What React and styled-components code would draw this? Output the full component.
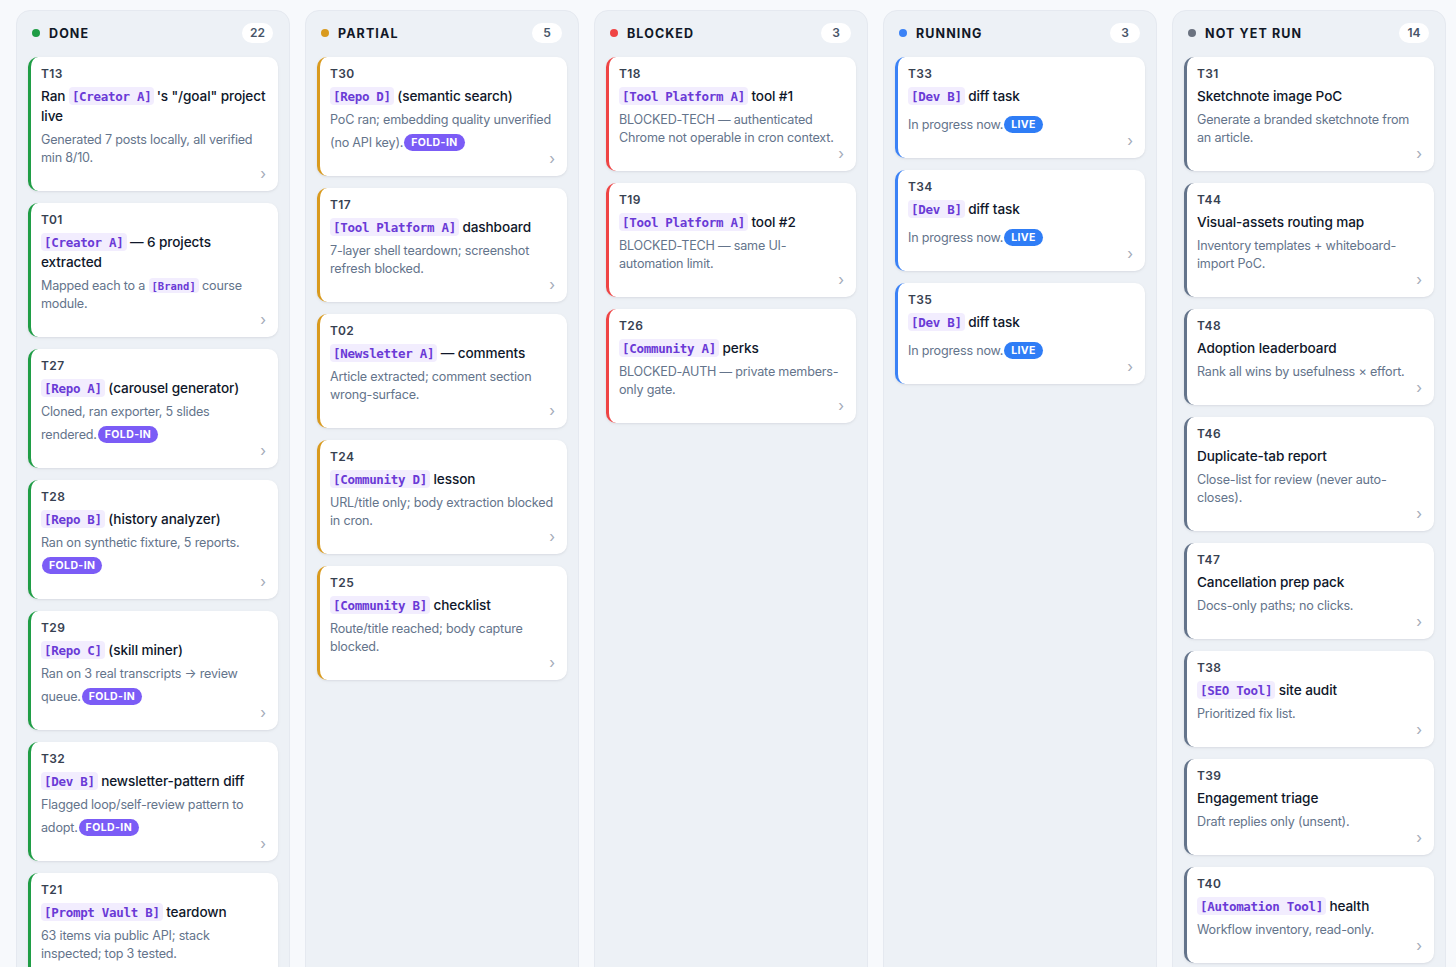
import React from 'react';
import styled, { createGlobalStyle } from 'styled-components';

const GlobalStyle = createGlobalStyle`
  html, body {
    margin: 0;
    background: #f7f9fc;
    font-family: Inter, "Noto Sans", "Liberation Sans", sans-serif;
    -webkit-font-smoothing: antialiased;
  }
`;

const Board = styled.main`
  display: grid;
  grid-template-columns: repeat(5, 274px);
  gap: 15px;
  padding: 10px 16px 0;
  align-items: stretch;
`;

const Column = styled.section`
  background: #edf1f6;
  border: 1px solid #e5e9f0;
  border-radius: 14px;
  padding: 11px;
  display: flex;
  flex-direction: column;
`;

const ColumnHeader = styled.header`
  display: flex;
  align-items: center;
  height: 22px;
  padding: 0 5px 0 4px;
  margin-bottom: 13px;
`;

const Dot = styled.span`
  width: 8px;
  height: 8px;
  border-radius: 50%;
  background: ${p => p.$color};
  margin-right: 9px;
`;

const ColumnTitle = styled.h2`
  margin: 0;
  font-size: 12.5px;
  font-weight: 700;
  letter-spacing: 1.1px;
  color: #111827;
`;

const Count = styled.span`
  margin-left: auto;
  background: #fff;
  border-radius: 11px;
  height: 20px;
  min-width: 14px;
  padding: 0 8px;
  font-size: 12px;
  font-weight: 600;
  line-height: 20px;
  color: #475569;
  text-align: center;
`;

const Stack = styled.div`
  display: flex;
  flex-direction: column;
  gap: 12px;
`;

const Card = styled.article`
  background: #fff;
  border-radius: 10px;
  border-left: 3px solid ${p => p.$accent};
  padding: 10px 12px 10px 10px;
  box-shadow: 0 1px 2px rgba(15, 23, 42, 0.06), 0 1px 4px rgba(15, 23, 42, 0.04);
`;

const CardId = styled.div`
  font-size: 12px;
  font-weight: 600;
  line-height: 14px;
  letter-spacing: 0.4px;
  color: #374151;
`;

const Title = styled.div`
  margin-top: 5px;
  font-size: 13.6px;
  font-weight: 500;
  line-height: 20px;
  letter-spacing: -0.1px;
  color: #0f172a;
`;

const Desc = styled.div`
  margin-top: 5px;
  font-size: 12.6px;
  line-height: 18px;
  letter-spacing: -0.2px;
  color: #64748b;
`;

const Tag = styled.code`
  font-family: "DejaVu Sans Mono", "Liberation Mono", monospace;
  font-size: ${p => (p.$small ? '10.5px' : '12.5px')};
  font-weight: ${p => (p.$small ? 600 : 700)};
  line-height: 1;
  letter-spacing: ${p => (p.$small ? '0' : '-0.3px')};
  color: #6a3ad6;
  background: #f2edfe;
  padding: 2px 3px 1px;
  border-radius: 4px;
`;

const Badge = styled.span`
  display: inline-block;
  margin: 5px 0 0 1px;
  vertical-align: 1px;
  height: 17px;
  padding: 0 7px;
  border-radius: 9px;
  background: ${p => p.$bg};
  color: #fff;
  font-size: 10.5px;
  font-weight: 700;
  line-height: 17px;
  letter-spacing: 0.4px;
`;

const Chevron = styled.div`
  height: 14px;
  text-align: right;
  font-size: 15px;
  line-height: 14px;
  color: #a3abb8;
`;

const BADGES = {
  fold: { label: 'FOLD-IN', bg: '#7b5cf6' },
  live: { label: 'LIVE', bg: '#2f7df6' },
};

const columns = [
  {
    label: 'DONE', color: '#1f9d45', count: 22,
    cards: [
      { id: 'T13', title: ['Ran ', { t: 'Creator A' }, '\u2009\'s "/goal" project live'], desc: ['Generated 7 posts locally, all verified min 8/10.'] },
      { id: 'T01', title: [{ t: 'Creator A' }, ' — 6 projects extracted'], desc: ['Mapped each to a ', { t: 'Brand', small: true }, ' course module.'] },
      { id: 'T27', title: [{ t: 'Repo A' }, ' (carousel generator)'], desc: ['Cloned, ran exporter, 5 slides rendered.'], badge: 'fold' },
      { id: 'T28', title: [{ t: 'Repo B' }, ' (history analyzer)'], desc: ['Ran on synthetic fixture, 5 reports. '], badge: 'fold' },
      { id: 'T29', title: [{ t: 'Repo C' }, ' (skill miner)'], desc: ['Ran on 3 real transcripts → review queue.'], badge: 'fold' },
      { id: 'T32', title: [{ t: 'Dev B' }, ' newsletter-pattern diff'], desc: ['Flagged loop/self-review pattern to adopt.'], badge: 'fold' },
      { id: 'T21', title: [{ t: 'Prompt Vault B' }, ' teardown'], desc: ['63 items via public API; stack inspected; top 3 tested.'] },
    ],
  },
  {
    label: 'PARTIAL', color: '#d99a1e', count: 5,
    cards: [
      { id: 'T30', title: [{ t: 'Repo D' }, ' (semantic search)'], desc: ['PoC ran; embedding quality unverified (no API key).'], badge: 'fold' },
      { id: 'T17', title: [{ t: 'Tool Platform A' }, ' dashboard'], desc: ['7-layer shell teardown; screenshot refresh blocked.'] },
      { id: 'T02', title: [{ t: 'Newsletter A' }, ' — comments'], desc: ['Article extracted; comment section wrong-surface.'] },
      { id: 'T24', title: [{ t: 'Community D' }, ' lesson'], desc: ['URL/title only; body extraction blocked in cron.'] },
      { id: 'T25', title: [{ t: 'Community B' }, ' checklist'], desc: ['Route/title reached; body capture blocked.'] },
    ],
  },
  {
    label: 'BLOCKED', color: '#ef4444', count: 3,
    cards: [
      { id: 'T18', title: [{ t: 'Tool Platform A' }, ' tool #1'], desc: ['BLOCKED-TECH — authenticated Chrome not operable in cron context.'] },
      { id: 'T19', title: [{ t: 'Tool Platform A' }, ' tool #2'], desc: ['BLOCKED-TECH — same UI-automation limit.'] },
      { id: 'T26', title: [{ t: 'Community A' }, ' perks'], desc: ['BLOCKED-AUTH — private members-only gate.'] },
    ],
  },
  {
    label: 'RUNNING', color: '#3b82f6', count: 3,
    cards: [
      { id: 'T33', title: [{ t: 'Dev B' }, ' diff task'], desc: ['In progress now.'], badge: 'live' },
      { id: 'T34', title: [{ t: 'Dev B' }, ' diff task'], desc: ['In progress now.'], badge: 'live' },
      { id: 'T35', title: [{ t: 'Dev B' }, ' diff task'], desc: ['In progress now.'], badge: 'live' },
    ],
  },
  {
    label: 'NOT YET RUN', color: '#6b7280', accent: '#64748b', count: 14,
    cards: [
      { id: 'T31', title: ['Sketchnote image PoC'], desc: ['Generate a branded sketchnote from an article.'] },
      { id: 'T44', title: ['Visual-assets routing map'], desc: ['Inventory templates + whiteboard-import PoC.'] },
      { id: 'T48', title: ['Adoption leaderboard'], desc: ['Rank all wins by usefulness × effort.'] },
      { id: 'T46', title: ['Duplicate-tab report'], desc: ['Close-list for review (never auto-closes).'] },
      { id: 'T47', title: ['Cancellation prep pack'], desc: ['Docs-only paths; no clicks.'] },
      { id: 'T38', title: [{ t: 'SEO Tool' }, ' site audit'], desc: ['Prioritized fix list.'] },
      { id: 'T39', title: ['Engagement triage'], desc: ['Draft replies only (unsent).'] },
      { id: 'T40', title: [{ t: 'Automation Tool' }, ' health'], desc: ['Workflow inventory, read-only.'] },
    ],
  },
];

function Parts({ parts }) {
  return parts.map((p, i) =>
    typeof p === 'string' ? <React.Fragment key={i}>{p}</React.Fragment> : <Tag key={i} $small={p.small}>[{p.t}]</Tag>
  );
}

function TaskCard({ card, accent }) {
  const badge = card.badge && BADGES[card.badge];
  return (
    <Card $accent={accent}>
      <CardId>{card.id}</CardId>
      <Title><Parts parts={card.title} /></Title>
      <Desc>
        <Parts parts={card.desc} />
        {badge && <Badge $bg={badge.bg}>{badge.label}</Badge>}
      </Desc>
      <Chevron>›</Chevron>
    </Card>
  );
}

export default function App() {
  return (
    <>
      <GlobalStyle />
      <Board>
        {columns.map(col => (
          <Column key={col.label}>
            <ColumnHeader>
              <Dot $color={col.color} />
              <ColumnTitle>{col.label}</ColumnTitle>
              <Count>{col.count}</Count>
            </ColumnHeader>
            <Stack>
              {col.cards.map(card => (
                <TaskCard key={card.id} card={card} accent={col.accent || col.color} />
              ))}
            </Stack>
          </Column>
        ))}
      </Board>
    </>
  );
}
